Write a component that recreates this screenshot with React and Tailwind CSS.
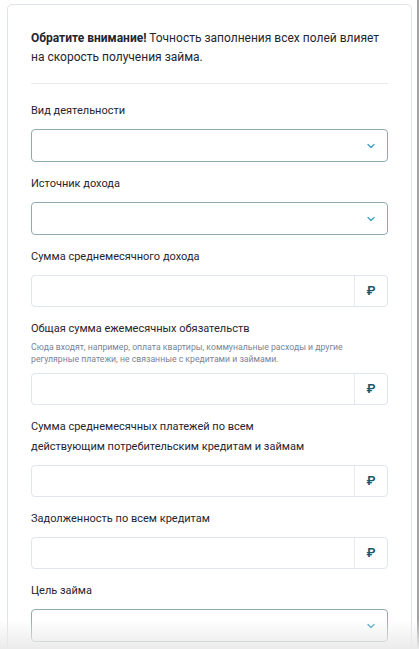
import { ChevronDown } from "lucide-react";

const fields = [
  { label: "Вид деятельности", type: "select" },
  { label: "Источник дохода", type: "select" },
  { label: "Сумма среднемесячного дохода", type: "money" },
  {
    label: "Общая сумма ежемесячных обязательств",
    hint: "Сюда входят, например, оплата квартиры, коммунальные расходы и другие регулярные платежи, не связанные с кредитами и займами.",
    type: "money",
  },
  {
    label: "Сумма среднемесячных платежей по всем действующим потребительским кредитам и займам",
    type: "money",
    narrow: true,
  },
  { label: "Задолженность по всем кредитам", type: "money" },
  { label: "Цель займа", type: "select" },
];

function SelectBox() {
  return (
    <div className="h-[33px] rounded-[4px] border border-[#90aab2] bg-white flex items-center justify-end pr-[10px]">
      <ChevronDown className="w-[12px] h-[12px] text-[#3f9fbb]" strokeWidth={2.5} />
    </div>
  );
}

function MoneyInput() {
  return (
    <div className="h-[32px] rounded-[4px] border border-[#dfe4ef] bg-white flex">
      <div className="flex-1" />
      <div className="w-[33px] border-l border-[#e6e9f1] flex items-center justify-center text-[13px] font-semibold text-[#1d5866]">
        ₽
      </div>
    </div>
  );
}

export default function App() {
  return (
    <div
      className="relative w-[419px] h-[649px] overflow-hidden bg-white flex"
      style={{ fontFamily: "Roboto, 'Noto Sans', sans-serif" }}
    >
      <div className="flex-1 pl-[7px] pr-[5px] pt-[4px]">
        <div className="border border-[#dfe3ec] rounded-[5px] px-[23px] pt-[24px] pb-6">
          <p className="text-[12px] leading-[19px] text-[#1f2530]">
            <span className="font-bold">Обратите внимание!</span> Точность заполнения всех полей влияет на скорость получения займа.
          </p>
          <div className="h-px bg-[#e6e9ee] mt-[16px] mb-[17px]" />

          <div className="flex flex-col gap-[12px]">
            {fields.map((f) => (
              <div key={f.label}>
                <div
                  className={`text-[11px] leading-[20px] text-[#1f2530] ${f.narrow ? "max-w-[288px]" : ""}`}
                >
                  {f.label}
                </div>
                {f.hint && (
                  <div className="mt-[2px] text-[8.7px] leading-[12px] text-[#7b8398] pr-4">{f.hint}</div>
                )}
                <div className="mt-[8px]">
                  {f.type === "select" ? <SelectBox /> : <MoneyInput />}
                </div>
              </div>
            ))}
          </div>
        </div>
      </div>
      <div className="w-[2px] bg-[#a3a3a3]" />

      {/* bottom fade */}
      <div className="pointer-events-none absolute left-0 right-0 bottom-0 h-[30px] bg-gradient-to-b from-transparent to-[#ebebeb]" />
    </div>
  );
}
